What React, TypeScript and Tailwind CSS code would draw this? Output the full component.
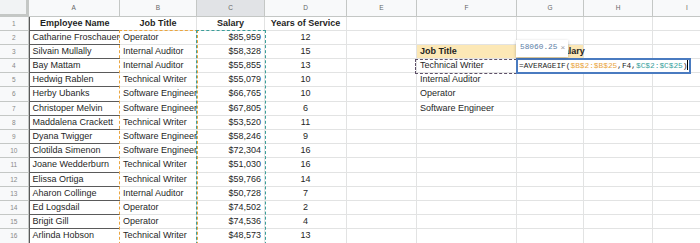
import React from 'react';

const COLS = ['A', 'B', 'C', 'D', 'E', 'F', 'G', 'H', 'I'];

const employees: [string, string, string, number][] = [
  ['Catharine Froschauer', 'Operator', '$85,959', 12],
  ['Silvain Mullally', 'Internal Auditor', '$58,328', 15],
  ['Bay Mattam', 'Internal Auditor', '$55,855', 13],
  ['Hedwig Rablen', 'Technical Writer', '$55,079', 10],
  ['Herby Ubanks', 'Software Engineer', '$66,765', 10],
  ['Christoper Melvin', 'Software Engineer', '$67,805', 6],
  ['Maddalena Crackett', 'Technical Writer', '$53,520', 11],
  ['Dyana Twigger', 'Software Engineer', '$58,246', 9],
  ['Clotilda Simenon', 'Software Engineer', '$72,304', 16],
  ['Joane Wedderburn', 'Technical Writer', '$51,030', 16],
  ['Elissa Ortiga', 'Technical Writer', '$59,766', 14],
  ['Aharon Collinge', 'Internal Auditor', '$50,728', 7],
  ['Ed Logsdail', 'Operator', '$74,502', 2],
  ['Brigit Gill', 'Operator', '$74,536', 4],
  ['Arlinda Hobson', 'Technical Writer', '$48,573', 13],
];

const lookup: Record<number, string> = {
  5: 'Internal Auditor',
  6: 'Operator',
  7: 'Software Engineer',
};

const gridCols =
  'grid grid-cols-[28.5px_91.5px_77px_68px_82px_70px_100px_67px_69px_69px_1fr]';
const cell =
  'h-[14.2px] border-r border-b border-[#e2e3e3] px-[3px] text-[9px] leading-[13.5px] whitespace-nowrap text-[#1f1f1f]';
const colA =
  'h-[14.2px] border-l border-b border-[#5a5a5a] px-[3px] text-[9px] leading-[13.5px] whitespace-nowrap text-[#1f1f1f]';

const RowHead: React.FC<{ n: number }> = ({ n }) => (
  <div className="h-[14.2px] bg-[#f8f9fa] border-r border-b border-[#c4c7c5] text-center text-[6.5px] leading-[14px] text-[#888]">
    {n}
  </div>
);

const App: React.FC = () => {
  return (
    <div className="relative w-[700px] h-[243px] overflow-hidden bg-white font-['Liberation_Sans',Arial,sans-serif]">
      {/* column headers */}
      <div className={gridCols}>
        <div className="h-[16.5px] bg-[#f1f3f4] border-r-[3px] border-b-[3px] border-[#c4c7c5]" />
        {COLS.map((c) => (
          <div
            key={c}
            className={`h-[16.5px] border-r border-b border-[#c4c7c5] text-center text-[6.5px] leading-[16px] text-[#666] ${
              c === 'C' ? 'bg-[#e1e3e6]' : 'bg-[#f8f9fa]'
            }`}
          >
            {c}
          </div>
        ))}
        <div className="h-[16.5px] bg-[#f8f9fa] border-b border-[#c4c7c5]" />
      </div>

      {/* row 1 */}
      <div className={gridCols}>
        <RowHead n={1} />
        <div className={`${colA} font-bold text-center`}>Employee Name</div>
        <div className={`${cell} font-bold text-center`}>Job Title</div>
        <div className={`${cell} font-bold text-center`}>Salary</div>
        <div className={`${cell} font-bold text-center`}>Years of Service</div>
        <div className={cell} />
        <div className={cell} />
        <div className={cell} />
        <div className={cell} />
        <div className={cell} />
        <div className={cell} />
      </div>

      {employees.map(([name, title, salary, years], i) => {
        const r = i + 2;
        const isHead = r === 3;
        return (
          <div key={r} className={gridCols}>
            <RowHead n={r} />
            <div className={colA}>{name}</div>
            <div className={cell}>{title}</div>
            <div className={`${cell} text-right`}>{salary}</div>
            <div className={`${cell} text-center`}>{years}</div>
            <div className={cell} />
            <div className={`${cell} ${isHead ? 'bg-[#fce8b6] font-bold' : ''}`}>
              {isHead ? 'Job Title' : r === 4 ? 'Technical Writer' : lookup[r] ?? ''}
            </div>
            <div className={`${cell} ${isHead ? 'bg-[#fce8b6] font-bold' : ''}`}>
              {isHead ? 'Average Salary' : ''}
            </div>
            <div className={cell} />
            <div className={cell} />
            <div className={cell} />
          </div>
        );
      })}

      {/* formula range highlights */}
      <div className="absolute left-[119px] top-[30px] w-[79px] h-[230px] border-[1.5px] border-dashed border-[#eaa53f]" />
      <div className="absolute left-[196px] top-[30px] w-[70px] h-[230px] border-[1.5px] border-dashed border-[#3b9e9a]" />
      <div className="absolute left-[415px] top-[58.5px] w-[102px] h-[15px] border-[1.5px] border-dashed border-[#5e5068]" />

      {/* editing cell */}
      <div className="absolute left-[515.5px] top-[57.5px] w-[175px] h-[16.5px] border-2 border-[#4a7bc0] bg-white pl-[1.5px] font-['Liberation_Mono',monospace] text-[7.8px] leading-[12.5px] whitespace-nowrap text-[#1f1f1f]">
        =AVERAGEIF(<span className="text-[#e9a53c]">$B$2:$B$25</span>,F4,<span className="text-[#3aa29d]">$C$2:$C$25</span>)
        <span className="inline-block w-px h-[10px] align-middle bg-black" />
      </div>

      {/* result tooltip */}
      <div className="absolute left-[516px] top-[40px] w-[52px] h-[16.5px] bg-white shadow-[0_1px_3px_rgba(0,0,0,0.25)] flex items-center gap-[3px] pl-[4px] font-['Liberation_Mono',monospace] text-[7.8px] text-[#5b7ea6]">
        <span>58060.25</span>
        <span className="text-[#9aa0a6] text-[8px] font-['Liberation_Sans',sans-serif]">×</span>
      </div>
    </div>
  );
};

export default App;
